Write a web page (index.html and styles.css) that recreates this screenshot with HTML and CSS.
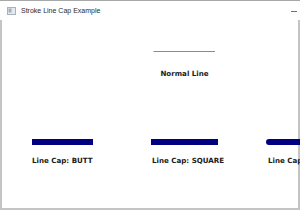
FILE: index.html
```html
<!DOCTYPE html>
<html lang="en">
<head>
  <meta charset="UTF-8">
  <title>Stroke Line Cap Example</title>
  <link rel="stylesheet" href="styles.css">
</head>
<body>
  <!-- Window -->
  <div class="window">
    <!-- Title bar -->
    <div class="title-bar">
      <svg class="app-icon" width="9" height="8" viewBox="0 0 9 8">
        <rect x="0.5" y="0.5" width="8" height="7" fill="#e4e9ef" stroke="#a9b2bc"/>
        <rect x="1.5" y="1.5" width="3" height="4" fill="#a3afbd"/>
      </svg>
      <span class="title">Stroke Line Cap Example</span>
      <span class="min-button"></span>
    </div>

    <!-- Scene -->
    <div class="scene">
      <svg class="canvas" width="298" height="188" viewBox="0 0 298 188">
        <line class="normal-line" x1="151.5" y1="31.5" x2="213" y2="31.5"/>
        <text class="label" x="182.5" y="55.5" text-anchor="middle">Normal Line</text>

        <line class="cap-line" x1="30" y1="122" x2="91" y2="122" stroke-linecap="butt"/>
        <text class="label" x="30" y="142.5">Line Cap: BUTT</text>

        <line class="cap-line" x1="152" y1="122" x2="213" y2="122" stroke-linecap="square"/>
        <text class="label" x="150" y="142.5">Line Cap: SQUARE</text>

        <line class="cap-line" x1="267" y1="122" x2="328" y2="122" stroke-linecap="round"/>
        <text class="label" x="266" y="142.5">Line Cap: ROUND</text>
      </svg>
    </div>
  </div>
</body>
</html>
```

FILE: styles.css
```css
/* =====================
   Global
   ===================== */
body {
  margin: 0;
  padding: 0;
  background: #ffffff;
  font-family: "Liberation Sans", Arial, sans-serif;
}

/* =====================
   Window frame
   ===================== */
.window {
  width: 300px;
  height: 210px;
  box-sizing: border-box;
  border-top: 1px solid #a8a8a8;
  display: flex;
  flex-direction: column;
  overflow: hidden;
}

.title-bar {
  height: 19px;
  display: flex;
  align-items: center;
  padding-left: 7px;
  background: #ffffff;
}

.app-icon {
  flex: none;
  margin-top: 1px;
}

.title {
  margin-left: 5px;
  font-size: 7px;
  color: #2b2b2b;
  flex: 1;
}

.min-button {
  width: 6px;
  height: 1px;
  background: #6f6f6f;
  margin-right: 3px;
  margin-top: 2px;
}

/* =====================
   Scene
   ===================== */
.scene {
  flex: 1;
  border-left: 2px solid #c4c4c4;
  border-right: 2px solid #c4c4c4;
  border-bottom: 2px solid #c4c4c4;
  background: #ffffff;
}

/* the scene content runs over the right frame edge */
.canvas {
  display: block;
}

.normal-line {
  stroke: #8c8c8c;
  stroke-width: 1;
}

.cap-line {
  stroke: #000080;
  stroke-width: 6;
}

.label {
  font-family: "DejaVu Sans", Verdana, sans-serif;
  font-weight: bold;
  font-size: 7.1px;
  fill: #1a1a1a;
}
```
